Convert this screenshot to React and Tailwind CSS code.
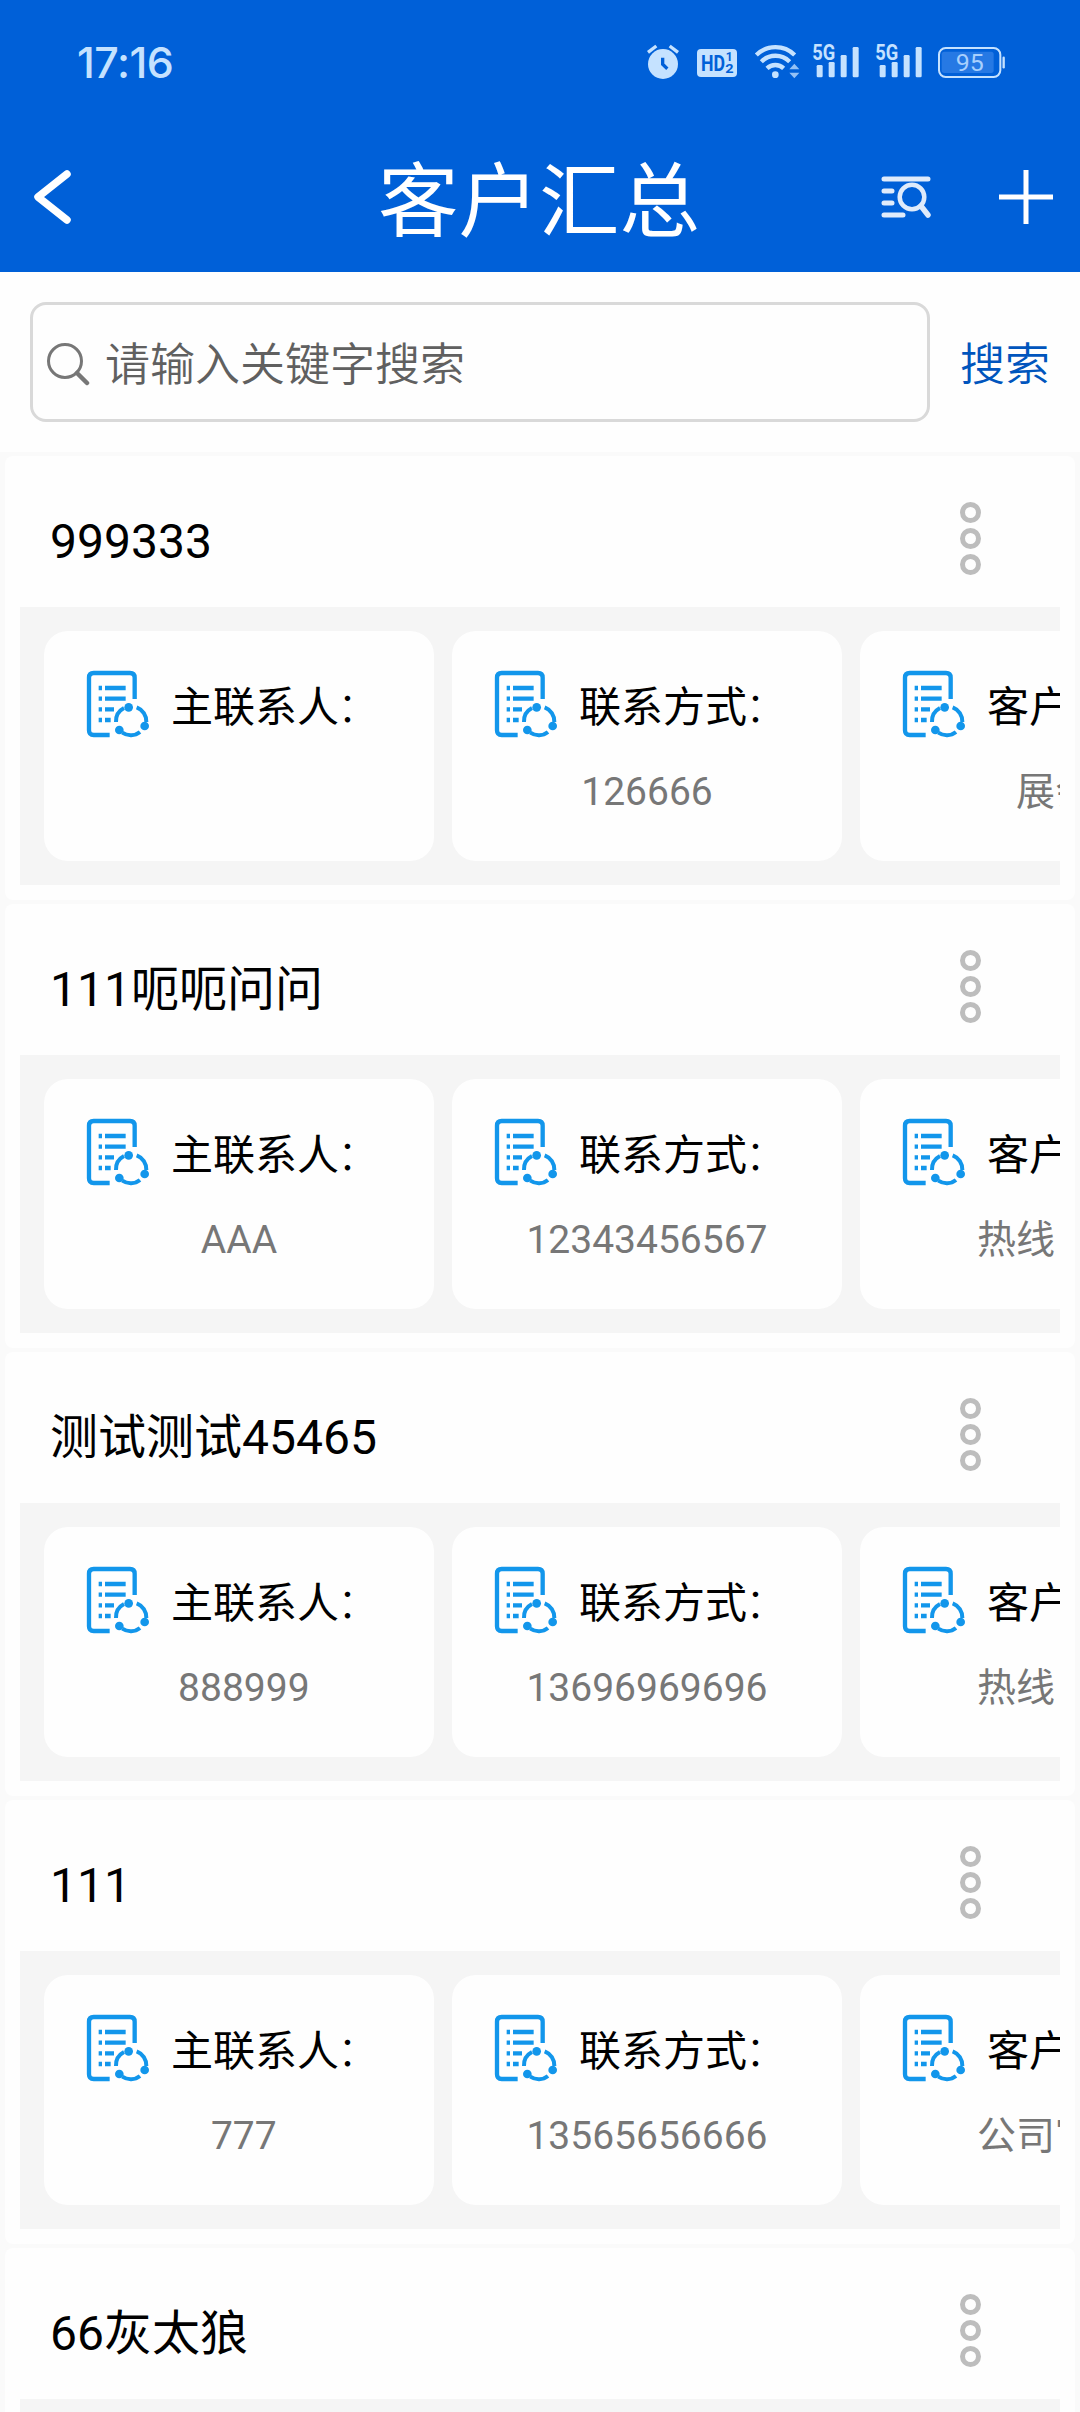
// values are shown exactly as stored, with their padding spaces
const customers = [
  { name: "999333", contact: "", phone: "126666", source: "展会" },
  { name: "111呃呃问问", contact: "AAA", phone: "12343456567", source: "热线\u3000\u3000" },
  { name: "测试测试45465", contact: " 888999", phone: "13696969696", source: "热线\u3000\u3000" },
  { name: "111", contact: " 777", phone: "13565656666", source: "公司官网" },
  { name: "66灰太狼", contact: "", phone: "", source: "" },
];

function Signal() {
  return (
    <svg viewBox="576 72 144 108" className="h-9 w-12 overflow-visible" fill="currentColor">
      <text x="577" y="121" fontSize="65" fontWeight="700" fontFamily="Roboto, sans-serif" textLength="69" lengthAdjust="spacingAndGlyphs">5G</text>
      <rect x="590" y="135" width="18" height="37" rx="4" />
      <rect x="626" y="126" width="18" height="46" rx="4" />
      <rect x="662" y="105" width="18" height="67" rx="4" />
      <rect x="698" y="81" width="18" height="91" rx="4" />
    </svg>
  );
}

function StatusBar() {
  return (
    <div className="flex h-[124px] items-center justify-between pl-[77px] pr-[73px] text-[#c5e2ff]">
      <span className="font-['Inter',sans-serif] text-[43px] font-medium tracking-[-0.5px]">17:16</span>
      <div className="flex items-center">
        <svg viewBox="81 72 96 108" className="h-9 w-8" fill="currentColor">
          <circle cx="129" cy="132" r="45" />
          <path d="M84 97l25-19M174 97l-25-19" stroke="currentColor" strokeWidth="10" />
          <path d="M128 113v20l14 13" fill="none" stroke="#0060d8" strokeWidth="10" />
        </svg>
        <svg viewBox="231 72 120 108" className="ml-[18px] h-9 w-10">
          <rect x="231" y="87" width="120" height="84" rx="12" fill="currentColor" />
          <g fill="#0060d8" fontFamily="Roboto, sans-serif" fontWeight="700">
            <text x="243" y="153" fontSize="66" textLength="72" lengthAdjust="spacingAndGlyphs">HD</text>
            <text x="317" y="124" fontSize="36">1</text>
            <text x="316" y="160" fontSize="39" textLength="25" lengthAdjust="spacingAndGlyphs">2</text>
          </g>
        </svg>
        <svg viewBox="402 72 138 108" className="ml-[17px] h-9 w-[46px]" fill="none" stroke="currentColor" strokeWidth="13">
          <path d="M409 105a82 82 0 0 1 115 0" />
          <path d="M424 125a60 60 0 0 1 85 0" />
          <path d="M441 145a36 36 0 0 1 50 0" />
          <circle cx="466" cy="164" r="10" fill="currentColor" stroke="none" />
          <path d="M508 148l15-17 15 17zM508 158l15 17 15-17z" fill="currentColor" stroke="none" opacity=".75" />
        </svg>
        <span className="ml-3 flex gap-[15px]">
          <Signal />
          <Signal />
        </span>
        <svg viewBox="951 72 210 108" className="ml-[14px] h-9 w-[70px]">
          <rect x="957" y="84" width="184" height="87" rx="20" fill="none" stroke="currentColor" strokeWidth="6" />
          <rect x="965" y="95" width="156" height="64" rx="8" fill="#2679e4" />
          <path d="M1151 113v29" stroke="currentColor" strokeWidth="7" strokeLinecap="round" />
          <text x="1007" y="153" fontSize="72" fill="#a8d0fd" fontFamily="Roboto, sans-serif" textLength="84" lengthAdjust="spacingAndGlyphs">95</text>
        </svg>
      </div>
    </div>
  );
}

function Header() {
  return (
    <header className="h-[272px] bg-[#0060d8] text-white">
      <StatusBar />
      <div className="grid h-[148px] grid-cols-[1fr_auto_1fr] items-center">
        <button aria-label="返回" className="mb-[3px] ml-8 w-11">
          <svg viewBox="0 0 44 60" className="h-[60px] w-11" fill="none" stroke="currentColor" strokeWidth="7.5" strokeLinecap="round" strokeLinejoin="round">
            <path d="M35 7L6 30l29 23" />
          </svg>
        </button>
        <h1 className="pr-0.5 pt-2.5 text-[80.5px] leading-none">客户汇总</h1>
        <div className="mb-[3px] flex items-center justify-end pr-[27px]">
          <svg viewBox="0 0 50 44" className="mr-[68px] h-11 w-[50px] text-[#dfebfb]" fill="none" stroke="currentColor" strokeWidth="5" strokeLinecap="round">
            <path d="M3 4h44M3 16h8M3 28h8M3 40h19" />
            <circle cx="31" cy="22" r="12.3" strokeWidth="4.5" />
            <path d="M40 31l7 9" strokeWidth="5.5" />
          </svg>
          <svg viewBox="0 0 54 54" className="h-[54px] w-[54px]" stroke="currentColor" strokeWidth="5">
            <path d="M0 27h54M27 0v54" />
          </svg>
        </div>
      </div>
    </header>
  );
}

function SearchBar() {
  return (
    <div className="flex h-[180px] items-center bg-[#fefefe] pl-[30px] text-[45px] font-[350] leading-none">
      <div className="flex h-[120px] w-[900px] items-center rounded-2xl border-[3px] border-[#d9d9d9] pl-[13px] text-[#606060]">
        <svg viewBox="0 0 44 44" className="mt-1 h-11 w-11 text-[#777]" fill="none" stroke="currentColor" strokeLinecap="round">
          <circle cx="19" cy="19" r="16.5" strokeWidth="3" />
          <path d="M31 31l10 10" strokeWidth="4.5" />
        </svg>
        <span className="ml-[15px] pt-[6px]">请输入关键字搜索</span>
      </div>
      <button className="ml-[30px] pt-[6px] text-[#0055bd]">搜索</button>
    </div>
  );
}

function RecordIcon() {
  return (
    <svg viewBox="80 60 192 204" className="h-[68px] w-16 shrink-0 text-[#1296eb]" fill="none" stroke="currentColor" strokeWidth="13">
      <path d="M226 147V83q0-14-14-14H103q-14 0-14 14v158q0 14 14 14h48" />
      <path d="M118 114h10M137 114h62M118 146h10M137 146h62M118 178h10M137 178h27M118 210h10M137 210h17" strokeWidth="13" />
      <path d="M170 216a45 45 0 0 1 24-42M232 172a45 45 0 0 1 29 44M189 248a45 45 0 0 0 53-2" strokeWidth="12" />
      <g fill="currentColor" stroke="none">
        <circle cx="208" cy="172" r="13" />
        <circle cx="180" cy="240" r="13" />
        <circle cx="256" cy="228" r="13" />
      </g>
    </svg>
  );
}

function InfoCard({ label, value }) {
  return (
    <div className="h-[230px] w-[390px] shrink-0 rounded-3xl bg-[#fefefe] pt-[39px]">
      <div className="flex h-[68px] items-center pl-[42px]">
        <RecordIcon />
        <span className="ml-[21px] mt-2 whitespace-nowrap text-[42px] leading-none text-black">
          {label}
          <span className="-ml-[2px] font-light">：</span>
        </span>
      </div>
      <p className="mt-8 whitespace-pre text-center text-[39px] leading-[44px] text-[#777]">{value}</p>
    </div>
  );
}

function CustomerItem({ customer }) {
  return (
    <li className="mx-[5px] mt-1 h-[444px] rounded-lg bg-[#fefefe] px-[15px]">
      <div className="flex h-[151px] items-center justify-between pl-[30px] pr-[79px]">
        <h2 className="pt-5 text-[48px] leading-none text-black">{customer.name}</h2>
        <button aria-label="更多" className="mt-[13px] flex flex-col gap-[5px]">
          <i className="size-[21px] rounded-full border-[5px] border-[#bdbdbd]" />
          <i className="size-[21px] rounded-full border-[5px] border-[#bdbdbd]" />
          <i className="size-[21px] rounded-full border-[5px] border-[#bdbdbd]" />
        </button>
      </div>
      <div className="flex h-[278px] gap-[18px] overflow-hidden bg-[#f5f5f5] pl-6 pt-6">
        <InfoCard label="主联系人" value={customer.contact} />
        <InfoCard label="联系方式" value={customer.phone} />
        <InfoCard label="客户来源" value={customer.source} />
      </div>
    </li>
  );
}

export default function App() {
  return (
    <div className="h-[2412px] w-[1080px] overflow-hidden bg-[#fafafa] font-[Roboto,'Noto_Sans_CJK_SC',sans-serif]">
      <Header />
      <SearchBar />
      <ul>
        {customers.map((customer) => (
          <CustomerItem key={customer.name} customer={customer} />
        ))}
      </ul>
    </div>
  );
}
